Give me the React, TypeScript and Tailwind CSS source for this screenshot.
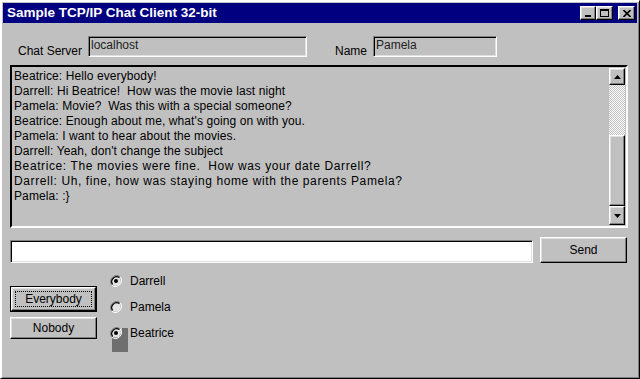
import React from "react";

const raised =
  "border border-t-white border-l-white border-r-black border-b-black shadow-[inset_-1px_-1px_0_#808080,inset_1px_1px_0_#dfdfdf]";
const sunken =
  "border border-t-[#808080] border-l-[#808080] border-r-white border-b-white shadow-[inset_1px_1px_0_#000,inset_-1px_-1px_0_#dfdfdf]";

// wide: the last two lines render noticeably wider in the original
const messages = [
  { text: "Beatrice: Hello everybody!" },
  { text: "Darrell: Hi Beatrice!  How was the movie last night" },
  { text: "Pamela: Movie?  Was this with a special someone?" },
  { text: "Beatrice: Enough about me, what's going on with you." },
  { text: "Pamela: I want to hear about the movies." },
  { text: "Darrell: Yeah, don't change the subject" },
  { text: "Beatrice: The movies were fine.  How was your date Darrell?", wide: true },
  { text: "Darrell: Uh, fine, how was staying home with the parents Pamela?", wide: true },
  { text: "Pamela: :}" },
];

function Radio({ label, checked }: { label: string; checked: boolean }) {
  return (
    <div className="flex items-center h-[16px] gap-[8px]">
      <svg width="12" height="12" viewBox="0 0 12 12" className="relative z-10 shrink-0">
        <circle cx="6" cy="6" r="4.5" fill="#e4e4e4" />
        <path d="M10.2 1.8A6 6 0 0 0 1.8 10.2" fill="none" stroke="#808080" strokeWidth="1" />
        <path d="M9.4 2.6A4.9 4.9 0 0 0 2.6 9.4" fill="none" stroke="#000" strokeWidth="1.2" />
        <path d="M1.8 10.2A6 6 0 0 0 10.2 1.8" fill="none" stroke="#fff" strokeWidth="1" />
        {checked && <circle cx="6" cy="6" r="2" fill="#000" />}
      </svg>
      <span className="relative z-10 text-[12px] leading-[14px]">{label}</span>
    </div>
  );
}

function Arrow({ up }: { up?: boolean }) {
  return (
    <svg width="7" height="4" viewBox="0 0 7 4">
      <path d={up ? "M3.5 0L7 4H0Z" : "M0 0H7L3.5 4Z"} fill="#000" />
    </svg>
  );
}

export default function App() {
  return (
    <div
      className={`w-[640px] h-[379px] bg-[#c0c0c0] text-black p-[2px] flex flex-col ${raised} border-t-[#dfdfdf] border-l-[#dfdfdf] shadow-[inset_1px_1px_0_#fff,inset_-1px_-1px_0_#808080]`}
      style={{ fontFamily: '"Liberation Sans", Arial, sans-serif' }}
    >
      {/* title bar */}
      <div className="h-[20px] bg-[#000080] flex items-center pl-[4px] pr-[2px] shrink-0">
        <span className="text-white font-bold text-[13.5px] leading-[16px] flex-1">
          Sample TCP/IP Chat Client 32-bit
        </span>
        <div className="flex items-center">
          <div className={`w-[16px] h-[14px] bg-[#c0c0c0] flex items-end justify-center pb-[2px] ${raised}`}>
            <div className="w-[6px] h-[2px] bg-black" />
          </div>
          <div className={`w-[17px] h-[14px] bg-[#c0c0c0] flex items-center justify-center ${raised}`}>
            <div className="w-[9px] h-[8px] border border-black border-t-2" />
          </div>
          <div className={`ml-[5px] w-[17px] h-[14px] bg-[#c0c0c0] flex items-center justify-center ${raised}`}>
            <svg width="8" height="7" viewBox="0 0 8 7">
              <path d="M0.5 0L7.5 7M7.5 0L0.5 7" stroke="#000" strokeWidth="1.6" />
            </svg>
          </div>
        </div>
      </div>

      {/* server / name row */}
      <div className="flex items-end mt-[13px] pl-[15px] h-[21px] shrink-0">
        <span className="w-[70px] text-[12px] leading-[14px] -mb-[1px]">Chat Server</span>
        <div className={`w-[219px] h-[21px] px-[2px] text-[12px] leading-[17px] text-[#222] ${sunken}`}>
          localhost
        </div>
        <span className="ml-[28px] w-[38px] text-[12px] leading-[14px] -mb-[1px]">Name</span>
        <div className={`w-[124px] h-[21px] px-[2px] text-[12px] leading-[17px] text-[#222] ${sunken}`}>
          Pamela
        </div>
      </div>

      {/* chat log */}
      <div className="ml-[7px] mt-[8px] w-[618px] h-[163px] flex shrink-0 p-[1px] border-2 border-t-black border-l-black border-r-white border-b-white">
        <div className="flex-1 pl-[1px] pt-[1px] text-[12px] leading-[15px] tracking-[0.1px]">
          {messages.map((m) => (
            <div key={m.text} className={`whitespace-pre ${m.wide ? "tracking-[0.6px]" : ""}`}>
              {m.text}
            </div>
          ))}
        </div>
        <div className="w-[16px] flex flex-col">
          <div className={`h-[17px] bg-[#c0c0c0] flex items-center justify-center ${raised}`}>
            <Arrow up />
          </div>
          <div className="h-[50px] bg-[image:repeating-conic-gradient(#fff_0_25%,#c0c0c0_0_50%)] bg-[length:2px_2px]" />
          <div className={`flex-1 bg-[#c0c0c0] ${raised}`} />
          <div className={`h-[19px] bg-[#c0c0c0] flex items-center justify-center ${raised}`}>
            <Arrow />
          </div>
        </div>
      </div>

      {/* message entry */}
      <div className="flex items-end mt-[9px] ml-[7px] shrink-0">
        <div className={`w-[523px] h-[23px] bg-white ${sunken}`} />
        <button className={`ml-[7px] w-[87px] h-[26px] bg-[#c0c0c0] text-[12px] leading-[14px] ${raised}`}>
          Send
        </button>
      </div>

      {/* recipients */}
      <div className="flex ml-[7px] shrink-0">
        <div className="w-[87px] flex flex-col pt-[23px] gap-[5px]">
          <div className="h-[26px] border border-black">
            <div className={`h-full p-[3px] bg-[#c0c0c0] ${raised}`}>
              <div className="h-full border border-dotted border-black flex items-center justify-center text-[12px] leading-[14px]">
                Everybody
              </div>
            </div>
          </div>
          <button className={`h-[22px] bg-[#c0c0c0] text-[12px] leading-[14px] ${raised}`}>Nobody</button>
        </div>
        <div className="ml-[13px] pt-[10px] flex flex-col gap-[10px] relative">
          <Radio label="Darrell" checked />
          <Radio label="Pamela" checked={false} />
          <div className="relative">
            <div className="absolute left-[2px] top-[9px] w-[16px] h-[18px] bg-[#6f6f6f]" />
            <div className="absolute left-[12px] top-[3px] w-[6px] h-[7px] bg-[#6f6f6f]" />
            <Radio label="Beatrice" checked />
          </div>
        </div>
      </div>
    </div>
  );
}
